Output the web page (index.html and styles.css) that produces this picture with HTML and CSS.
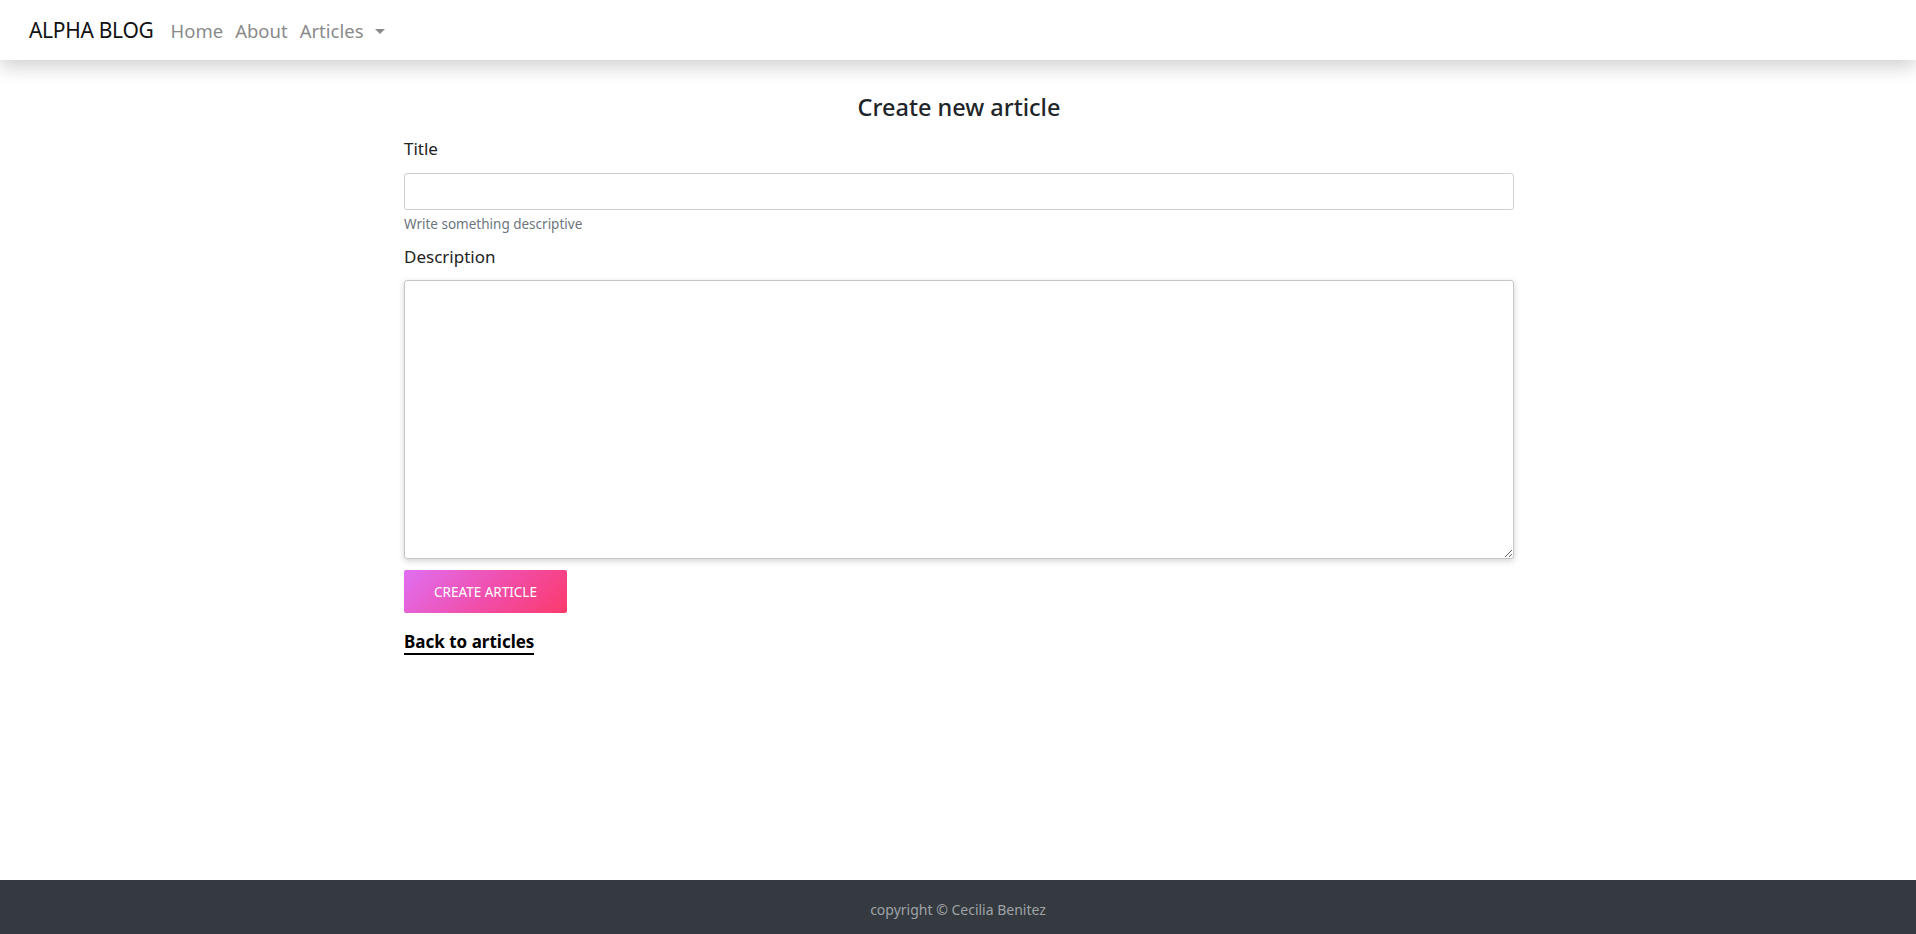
FILE: index.html
```html
<!DOCTYPE html>
<html lang="en">
<head>
<meta charset="utf-8">
<title>Alpha Blog</title>
<link rel="stylesheet" href="styles.css">
</head>
<body>
<div class="page">
  <nav class="navbar">
    <a class="brand" href="#">ALPHA BLOG</a>
    <a class="nav-link" href="#">Home</a>
    <a class="nav-link" href="#">About</a>
    <a class="nav-link dropdown" href="#">Articles <span class="caret"></span></a>
  </nav>
  <main class="container">
    <h3 class="heading">Create new article</h3>
    <form class="form">
      <div class="group">
        <label class="label" for="title">Title</label>
        <input class="control" id="title" type="text">
        <small class="help">Write something descriptive</small>
      </div>
      <div class="group">
        <label class="label" for="desc">Description</label>
        <textarea class="control area" id="desc"></textarea>
      </div>
      <button class="btn" type="button">CREATE ARTICLE</button>
    </form>
    <a class="back" href="#">Back to articles</a>
  </main>
  <footer class="footer">copyright © Cecilia Benitez</footer>
</div>
</body>
</html>
```
FILE: styles.css
```css
* { box-sizing: border-box; }
html, body { margin: 0; height: 100%; }
body {
  font-family: "Noto Sans", "Open Sans", sans-serif;
  color: #212529;
  background: #fff;
}
.page { min-height: 100vh; display: flex; flex-direction: column; }
.navbar {
  height: 60px;
  display: flex;
  align-items: center;
  padding: 0 29px;
  background: #fff;
  box-shadow: 0 6px 20px rgba(0,0,0,0.2);
  position: relative;
  z-index: 2;
}
.brand {
  font-size: 21px;
  color: #111;
  text-decoration: none;
  margin-right: 11px;
  letter-spacing: -0.3px;
}
.nav-link {
  font-size: 18.5px;
  color: #8a8a8a;
  text-decoration: none;
  padding: 0 6px;
}
.caret {
  display: inline-block;
  width: 0; height: 0;
  margin-left: 7px;
  vertical-align: 4px;
  border-left: 5px solid transparent;
  border-right: 5px solid transparent;
  border-top: 5px solid #8a8a8a;
}
.container {
  width: 1140px;
  margin: 0 auto;
  padding: 0 14px 0 16px;
  flex: 1;
}
.heading {
  text-align: center;
  font-size: 23.5px;
  font-weight: 500;
  margin: 33px 0 15px;
  line-height: 1.2;
}
.group { margin-bottom: 11px; }
.label {
  display: block;
  font-size: 17px;
  line-height: 1.5;
  margin-bottom: 11px;
  color: #222;
}
.control {
  display: block;
  width: 100%;
  height: 37px;
  border: 1px solid #cfcfcf;
  border-radius: 3px;
  padding: 6px 12px;
  font-size: 16px;
  font-family: inherit;
  background: #fff;
}
.area {
  height: 279px;
  resize: vertical;
  box-shadow: 0 2px 6px rgba(0,0,0,0.18);
  border-color: #c6c6c6;
}
.help {
  display: block;
  font-size: 13.5px;
  color: #6c757d;
  margin-top: 5px;
}
.btn {
  width: 163px;
  height: 43px;
  border: none;
  border-radius: 2px;
  background: linear-gradient(135deg, #df6ff2 0%, #f14da8 55%, #fb3a6c 100%);
  color: #fff;
  font-family: inherit;
  font-size: 13.5px;
  margin-top: 0;
  cursor: pointer;
}
.back {
  display: inline-block;
  margin-top: 19px;
  font-size: 17px;
  font-weight: 700;
  color: #000;
  text-decoration: none;
  border-bottom: 2px solid #000;
  line-height: 1.2;
}
.footer {
  height: 54px;
  padding-top: 5px;
  background: #343a40;
  color: #9fa3a7;
  font-size: 14px;
  display: flex;
  align-items: center;
  justify-content: center;
}
```
